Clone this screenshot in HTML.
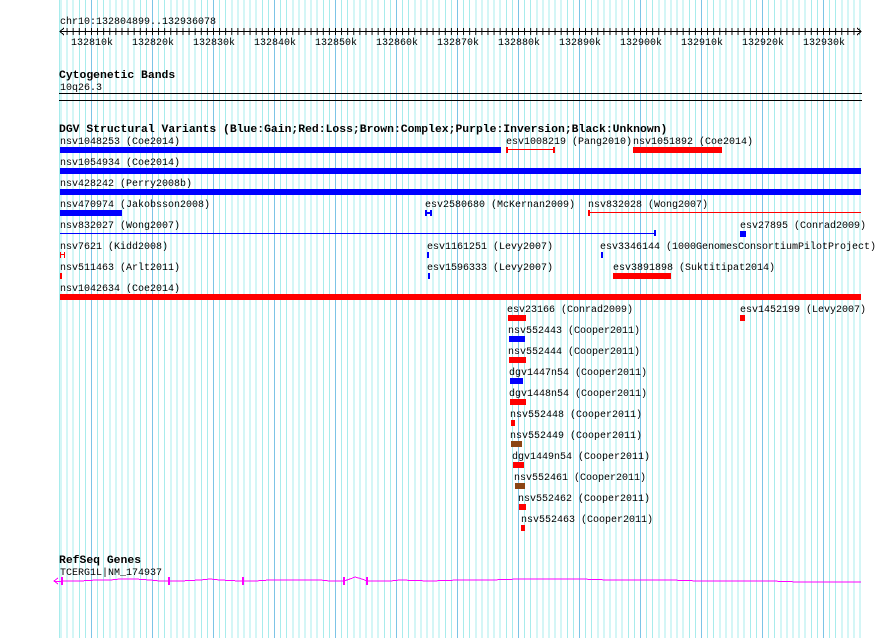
<!DOCTYPE html>
<html><head><meta charset="utf-8"><style>
html,body{margin:0;padding:0;background:#fff;width:890px;height:638px;overflow:hidden}
svg{display:block}
text{font-family:"Liberation Mono","DejaVu Sans Mono",monospace;font-size:10px;fill:#000}
.b{font-weight:bold;font-size:11.4px}
</style></head><body>
<svg width="890" height="638" viewBox="0 0 890 638" xmlns="http://www.w3.org/2000/svg" shape-rendering="crispEdges">
<defs>
<pattern id="g" x="91" y="0" width="61" height="10" patternUnits="userSpaceOnUse">
<rect x="0" y="0" width="1" height="10" fill="#7cc4e6"/>
<rect x="6.1" y="0" width="1" height="10" fill="#a8ecec"/>
<rect x="12.2" y="0" width="1" height="10" fill="#a8ecec"/>
<rect x="18.3" y="0" width="1" height="10" fill="#a8ecec"/>
<rect x="24.4" y="0" width="1" height="10" fill="#a8ecec"/>
<rect x="30.5" y="0" width="1" height="10" fill="#a8ecec"/>
<rect x="36.6" y="0" width="1" height="10" fill="#a8ecec"/>
<rect x="42.7" y="0" width="1" height="10" fill="#a8ecec"/>
<rect x="48.8" y="0" width="1" height="10" fill="#a8ecec"/>
<rect x="54.9" y="0" width="1" height="10" fill="#a8ecec"/>
</pattern>
<pattern id="t" x="91" y="28" width="6.1" height="7" patternUnits="userSpaceOnUse">
<rect x="0" y="0" width="1" height="7" fill="#000"/>
</pattern>
</defs>
<rect x="59" y="0" width="803" height="638" fill="url(#g)"/>
<rect x="59" y="0" width="1" height="638" fill="#a8ecec"/>

<!-- ruler -->
<text x="60" y="24">chr10:132804899..132936078</text>
<rect x="60" y="31" width="801" height="1" fill="#000"/>
<rect x="62" y="28" width="798" height="7" fill="url(#t)"/>
<path d="M64 28 L60 31.5 L64 35 M857 28 L861 31.5 L857 35" stroke="#000" fill="none"/>
<g text-anchor="middle">
<text x="92" y="45">132810k</text><text x="153" y="45">132820k</text><text x="214" y="45">132830k</text>
<text x="275" y="45">132840k</text><text x="336" y="45">132850k</text><text x="397" y="45">132860k</text>
<text x="458" y="45">132870k</text><text x="519" y="45">132880k</text><text x="580" y="45">132890k</text>
<text x="641" y="45">132900k</text><text x="702" y="45">132910k</text><text x="763" y="45">132920k</text>
<text x="824" y="45">132930k</text>
</g>

<text x="59" y="78" class="b">Cytogenetic Bands</text>
<text x="60" y="90">10q26.3</text>
<rect x="59" y="93" width="803" height="1" fill="#000"/>
<rect x="59" y="100" width="803" height="1" fill="#000"/>

<text x="59" y="132" class="b">DGV Structural Variants (Blue:Gain;Red:Loss;Brown:Complex;Purple:Inversion;Black:Unknown)</text>

<text x="60" y="144">nsv1048253 (Coe2014)</text>
<text x="506" y="144">esv1008219 (Pang2010)</text>
<text x="633" y="144">nsv1051892 (Coe2014)</text>
<rect x="60" y="147" width="441" height="6" fill="#0000ff"/>
<rect x="507" y="149" width="47" height="1" fill="#ff0000"/><rect x="506" y="147" width="2" height="6" fill="#ff0000"/><rect x="553" y="147" width="2" height="6" fill="#ff0000"/>
<rect x="633" y="147" width="89" height="6" fill="#ff0000"/>

<text x="60" y="165">nsv1054934 (Coe2014)</text>
<rect x="60" y="168" width="801" height="6" fill="#0000ff"/>
<text x="60" y="186">nsv428242 (Perry2008b)</text>
<rect x="60" y="189" width="801" height="6" fill="#0000ff"/>

<text x="60" y="207">nsv470974 (Jakobsson2008)</text>
<text x="425" y="207">esv2580680 (McKernan2009)</text>
<text x="588" y="207">nsv832028 (Wong2007)</text>
<rect x="60" y="210" width="62" height="6" fill="#0000ff"/>
<rect x="425" y="210" width="2" height="6" fill="#0000ff"/><rect x="430" y="210" width="2" height="6" fill="#0000ff"/><rect x="425" y="212" width="7" height="2" fill="#0000ff"/>
<rect x="588" y="212" width="273" height="1" fill="#ff0000"/><rect x="588" y="210" width="2" height="6" fill="#ff0000"/>

<text x="60" y="228">nsv832027 (Wong2007)</text>
<text x="740" y="228">esv27895 (Conrad2009)</text>
<rect x="60" y="233" width="595" height="1" fill="#0000ff"/><rect x="654" y="230" width="2" height="6" fill="#0000ff"/>
<rect x="740" y="231" width="6" height="6" fill="#0000ff"/>

<text x="60" y="249">nsv7621 (Kidd2008)</text>
<text x="427" y="249">esv1161251 (Levy2007)</text>
<text x="600" y="249">esv3346144 (1000GenomesConsortiumPilotProject)</text>
<rect x="60" y="252" width="1" height="6" fill="#ff0000"/><rect x="60" y="254" width="5" height="1" fill="#ff0000"/><rect x="64" y="252" width="1" height="6" fill="#ff0000"/>
<rect x="427" y="252" width="2" height="6" fill="#0000ff"/>
<rect x="601" y="252" width="2" height="6" fill="#0000ff"/>

<text x="60" y="270">nsv511463 (Arlt2011)</text>
<text x="427" y="270">esv1596333 (Levy2007)</text>
<text x="613" y="270">esv3891898 (Suktitipat2014)</text>
<rect x="60" y="273" width="2" height="6" fill="#ff0000"/>
<rect x="428" y="273" width="2" height="6" fill="#0000ff"/>
<rect x="613" y="273" width="58" height="6" fill="#ff0000"/>

<text x="60" y="291">nsv1042634 (Coe2014)</text>
<rect x="60" y="294" width="801" height="6" fill="#ff0000"/>

<text x="507" y="312">esv23166 (Conrad2009)</text>
<text x="740" y="312">esv1452199 (Levy2007)</text>
<rect x="508" y="315" width="18" height="6" fill="#ff0000"/>
<rect x="740" y="315" width="5" height="6" fill="#ff0000"/>

<text x="508" y="333">nsv552443 (Cooper2011)</text><rect x="509" y="336" width="16" height="6" fill="#0000ff"/>
<text x="508" y="354">nsv552444 (Cooper2011)</text><rect x="509" y="357" width="17" height="6" fill="#ff0000"/>
<text x="509" y="375">dgv1447n54 (Cooper2011)</text><rect x="510" y="378" width="13" height="6" fill="#0000ff"/>
<text x="509" y="396">dgv1448n54 (Cooper2011)</text><rect x="510" y="399" width="16" height="6" fill="#ff0000"/>
<text x="510" y="417">nsv552448 (Cooper2011)</text><rect x="511" y="420" width="4" height="6" fill="#ff0000"/>
<text x="510" y="438">nsv552449 (Cooper2011)</text><rect x="511" y="441" width="11" height="6" fill="#8b4513"/>
<text x="512" y="459">dgv1449n54 (Cooper2011)</text><rect x="513" y="462" width="11" height="6" fill="#ff0000"/>
<text x="514" y="480">nsv552461 (Cooper2011)</text><rect x="515" y="483" width="10" height="6" fill="#8b4513"/>
<text x="518" y="501">nsv552462 (Cooper2011)</text><rect x="519" y="504" width="7" height="6" fill="#ff0000"/>
<text x="521" y="522">nsv552463 (Cooper2011)</text><rect x="521" y="525" width="4" height="6" fill="#ff0000"/>

<text x="59" y="563" class="b">RefSeq Genes</text>
<text x="60" y="575">TCERG1L|NM_174937</text>
<g stroke="#ff00ff" fill="none">
<polyline points="61,581 80,581 97,580 110,580 120,579 135,579 150,580 160,581 169,581 180,581 200,580 210,579 220,580 240,581 243,581 255,581 270,580 300,580 320,580 330,581 344,581 350,579 355,577 362,579 367,581 390,581 400,580 430,581 460,580 490,580 520,579 550,579 580,579 610,580 640,580 670,580 700,581 740,581 770,581 800,582 861,582"/>
<path d="M58 578 L54 581 L58 584"/>
</g>
<g fill="#ff00ff">
<rect x="54" y="581" width="8" height="1"/>
<rect x="61" y="577" width="2" height="8"/>
<rect x="168" y="577" width="2" height="8"/>
<rect x="242" y="577" width="2" height="8"/>
<rect x="343" y="577" width="2" height="8"/>
<rect x="366" y="577" width="2" height="8"/>
</g>
</svg>
</body></html>
